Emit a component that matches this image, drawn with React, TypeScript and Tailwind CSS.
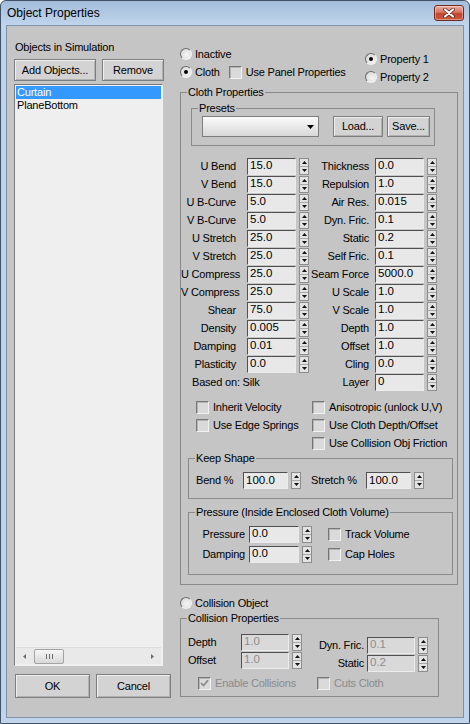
import React from "react";

type Kids = { children?: React.ReactNode };

function Spin() {
  return (
    <div className="flex h-[17px] w-[10px] shrink-0 flex-col border border-[#8c8c8c] bg-[#e3e3e3]">
      <div className="flex flex-1 items-center justify-center border-b border-[#a8a8a8]">
        <svg width="5" height="3" viewBox="0 0 5 3">
          <path d="M2.5 0L5 3H0Z" fill="#111" />
        </svg>
      </div>
      <div className="flex flex-1 items-center justify-center">
        <svg width="5" height="3" viewBox="0 0 5 3">
          <path d="M0 0H5L2.5 3Z" fill="#111" />
        </svg>
      </div>
    </div>
  );
}

function Num({ v, w, dis }: { v: string; w: string; dis?: boolean }) {
  return (
    <div
      className={`flex h-[17px] shrink-0 items-center overflow-hidden border border-t-[#505050] border-l-[#505050] border-b-[#ececec] border-r-[#ececec] pl-[2px] text-[11.5px] leading-none tracking-normal ${
        dis ? "bg-[#d9d9d9] text-[#8e8e8e]" : "bg-[#e8e8e8] text-black"
      } ${w}`}
    >
      {v}
    </div>
  );
}

function Radio({ on }: { on?: boolean }) {
  return (
    <div className="flex h-[12px] w-[12px] shrink-0 items-center justify-center rounded-full border border-t-[#6c6c6c] border-l-[#6c6c6c] border-b-[#f3f3f3] border-r-[#f3f3f3] bg-[radial-gradient(circle_at_60%_60%,#f6f6f6,#d2d2d2)]">
      {on && <div className="h-[4px] w-[4px] rounded-full bg-black" />}
    </div>
  );
}

function Box({ checked, dis }: { checked?: boolean; dis?: boolean }) {
  return (
    <div className="flex h-[13px] w-[13px] shrink-0 items-center justify-center border border-t-[#777777] border-l-[#777777] border-b-[#f2f2f2] border-r-[#f2f2f2] bg-[#dadada] shadow-[inset_1px_1px_0_#b4b4b4]">
      {checked && (
        <svg width="9" height="8" viewBox="0 0 9 8">
          <path d="M1 4L3.5 6.5L8 1.2" stroke={dis ? "#8a8a8a" : "#000"} strokeWidth="1.7" fill="none" />
        </svg>
      )}
    </div>
  );
}

function Btn({ children, cls }: Kids & { cls: string }) {
  return (
    <div
      className={`flex shrink-0 items-center justify-center border border-[#7e7e7e] bg-[#d3d3d3] shadow-[inset_1px_1px_0_#efefef,inset_-1px_-1px_0_#b2b2b2] text-black ${cls}`}
    >
      {children}
    </div>
  );
}

function Group({ label, cls, children }: Kids & { label: string; cls: string }) {
  return (
    <fieldset className={`border border-[#8a8a8a] ${cls}`}>
      <legend className="ml-[6px] px-[1px] leading-[13px]">{label}</legend>
      {children}
    </fieldset>
  );
}

const rows: [string, string, string, string][] = [
  ["U Bend", "15.0", "Thickness", "0.0"],
  ["V Bend", "15.0", "Repulsion", "1.0"],
  ["U B-Curve", "5.0", "Air Res.", "0.015"],
  ["V B-Curve", "5.0", "Dyn. Fric.", "0.1"],
  ["U Stretch", "25.0", "Static", "0.2"],
  ["V Stretch", "25.0", "Self Fric.", "0.1"],
  ["U Compress", "25.0", "Seam Force", "5000.0"],
  ["V Compress", "25.0", "U Scale", "1.0"],
  ["Shear", "75.0", "V Scale", "1.0"],
  ["Density", "0.005", "Depth", "1.0"],
  ["Damping", "0.01", "Offset", "1.0"],
  ["Plasticity", "0.0", "Cling", "0.0"],
];

function ParamRow({ r }: { r: [string, string, string, string] }) {
  return (
    <div className="flex h-[18px] items-center">
      <div className="w-[55px] text-right whitespace-nowrap">{r[0]}</div>
      <Num v={r[1]} w="ml-[11px] w-[49px]" />
      <div className="ml-[3px]">
        <Spin />
      </div>
      <div className="w-[60px] text-right whitespace-nowrap">{r[2]}</div>
      <Num v={r[3]} w="ml-[6px] w-[49px]" />
      <div className="ml-[3px]">
        <Spin />
      </div>
    </div>
  );
}

function CheckItem({ label, w, checked, dis }: { label: string; w: string; checked?: boolean; dis?: boolean }) {
  return (
    <div className={`flex h-[18px] shrink-0 items-center gap-[4px] whitespace-nowrap ${w} ${dis ? "text-[#8a8a8a]" : ""}`}>
      <Box checked={checked} dis={dis} />
      <span>{label}</span>
    </div>
  );
}

function RadioItem({ label, on }: { label: string; on?: boolean }) {
  return (
    <div className="flex h-[18px] shrink-0 items-center gap-[3px] whitespace-nowrap">
      <Radio on={on} />
      <span>{label}</span>
    </div>
  );
}

export default function App() {
  return (
    <div className="h-[724px] w-[470px] overflow-hidden font-['Liberation_Sans',Arial,sans-serif] text-[11px] leading-[13px] tracking-[-0.2px] text-black">
      <div className="flex h-full w-full flex-col rounded-t-[6px] border border-[#3f5268] bg-[linear-gradient(180deg,#a3bddb_0px,#c0d5ec_24px,#c0d5ec_100%)] px-[5px] pb-[5px]">
        {/* Title bar */}
        <div className="flex h-[24px] shrink-0 items-center">
          <span className="ml-[1px] text-[12px] tracking-normal text-black">Object Properties</span>
          <div className="ml-auto flex h-[16px] w-[30px] items-center justify-center rounded-[3px] border border-[#6e2b22] bg-[linear-gradient(180deg,#eab0a2_0%,#d8735f_45%,#c3432d_55%,#cf5a40_100%)] shadow-[inset_0_0_0_1px_rgba(255,255,255,0.35)]">
            <svg width="12" height="10" viewBox="0 0 12 10">
              <path d="M2 1.5L10 8.5M10 1.5L2 8.5" stroke="#5a1d15" strokeWidth="3.6" strokeLinecap="round" />
              <path d="M2 1.5L10 8.5M10 1.5L2 8.5" stroke="#ffffff" strokeWidth="2.2" strokeLinecap="round" />
            </svg>
          </div>
        </div>

        {/* Client */}
        <div className="flex flex-1 border border-[#7e93ab] bg-[#c5c5c5] pl-[7px]">
          {/* Left column */}
          <div className="flex w-[156px] shrink-0 flex-col pt-[15px]">
            <div className="ml-[1px] h-[13px] whitespace-nowrap">Objects in Simulation</div>
            <div className="mt-[5px] flex gap-[6px]">
              <Btn cls="h-[22px] w-[82px]">Add Objects...</Btn>
              <Btn cls="h-[22px] w-[62px]">Remove</Btn>
            </div>
            <div className="mt-[3px] flex h-[582px] w-[149px] flex-col border border-t-[#7a7a7a] border-l-[#7a7a7a] border-b-[#f2f2f2] border-r-[#f2f2f2] bg-[#efefef] p-[1px]">
              <div className="h-[13px] bg-[#3399ff] pl-[1px] text-white">Curtain</div>
              <div className="h-[13px] pl-[1px]">PlaneBottom</div>
              <div className="mt-auto flex h-[17px] items-center border-t border-[#dcdcdc] bg-[#e9e9e9]">
                <div className="flex w-[17px] justify-center">
                  <svg width="3" height="5" viewBox="0 0 3 5">
                    <path d="M3 0V5L0 2.5Z" fill="#6a6a6a" />
                  </svg>
                </div>
                <div className="ml-[1px] flex h-[15px] w-[30px] items-center justify-center rounded-[2px] border border-[#a3a3a3] bg-gradient-to-b from-[#f6f6f6] to-[#d9d9d9]">
                  <svg width="7" height="5" viewBox="0 0 7 5">
                    <path d="M0.5 0V5M3.5 0V5M6.5 0V5" stroke="#6b6b6b" strokeWidth="1" />
                  </svg>
                </div>
                <div className="flex-1" />
                <div className="flex w-[17px] justify-center">
                  <svg width="3" height="5" viewBox="0 0 3 5">
                    <path d="M0 0V5L3 2.5Z" fill="#6a6a6a" />
                  </svg>
                </div>
              </div>
            </div>
            <div className="mt-[8px] flex gap-[6px] pl-[1px]">
              <Btn cls="h-[24px] w-[75px]">OK</Btn>
              <Btn cls="h-[24px] w-[75px]">Cancel</Btn>
            </div>
          </div>

          {/* Right column */}
          <div className="ml-[10px] flex w-[278px] shrink-0 flex-col pt-[19px]">
            <div className="flex h-[36px] items-start">
              <div className="flex w-[185px] flex-col">
                <RadioItem label="Inactive" />
                <div className="flex h-[18px] items-center">
                  <RadioItem label="Cloth" on />
                  <div className="ml-[9px]">
                    <CheckItem label="Use Panel Properties" w="" />
                  </div>
                </div>
              </div>
              <div className="flex flex-col pt-[5px]">
                <RadioItem label="Property 1" on />
                <RadioItem label="Property 2" />
              </div>
            </div>

            <Group label="Cloth Properties" cls="mt-[5px] w-[278px] pb-[9px]">
              <Group label="Presets" cls="mt-[3px] ml-[10px] w-[244px] pb-[8px]">
                <div className="mt-[1px] flex items-center">
                  <div className="ml-[10px] flex h-[21px] w-[117px] items-center justify-end border border-[#7e7e7e] bg-gradient-to-b from-[#fbfbfb] to-[#d8d8d8] pr-[4px]">
                    <svg width="7" height="4" viewBox="0 0 7 4">
                      <path d="M0 0H7L3.5 4Z" fill="#000" />
                    </svg>
                  </div>
                  <Btn cls="ml-[14px] h-[21px] w-[50px]">Load...</Btn>
                  <Btn cls="ml-[4px] h-[21px] w-[43px]">Save...</Btn>
                </div>
              </Group>

              <div className="mt-[11px] flex flex-col">
                {rows.map((r) => (
                  <ParamRow key={r[0]} r={r} />
                ))}
                <div className="flex h-[18px] items-center">
                  <div className="w-[128px] pl-[11px] whitespace-nowrap">Based on: Silk</div>
                  <div className="w-[60px] text-right">Layer</div>
                  <Num v="0" w="ml-[6px] w-[49px]" />
                  <div className="ml-[3px]">
                    <Spin />
                  </div>
                </div>
              </div>

              <div className="mt-[7px] flex flex-col pl-[15px]">
                <div className="flex">
                  <CheckItem label="Inherit Velocity" w="w-[116px]" />
                  <CheckItem label="Anisotropic (unlock U,V)" w="" />
                </div>
                <div className="flex">
                  <CheckItem label="Use Edge Springs" w="w-[116px]" />
                  <CheckItem label="Use Cloth Depth/Offset" w="" />
                </div>
                <div className="flex">
                  <div className="w-[116px]" />
                  <CheckItem label="Use Collision Obj Friction" w="" />
                </div>
              </div>

              <Group label="Keep Shape" cls="ml-[7px] w-[265px] pb-[9px]">
                <div className="mt-[7px] flex items-center pl-[7px]">
                  <div className="w-[47px] whitespace-nowrap">Bend %</div>
                  <Num v="100.0" w="w-[45px]" />
                  <div className="ml-[3px]">
                    <Spin />
                  </div>
                  <div className="ml-[10px] w-[55px] whitespace-nowrap">Stretch %</div>
                  <Num v="100.0" w="w-[45px]" />
                  <div className="ml-[3px]">
                    <Spin />
                  </div>
                </div>
              </Group>

              <Group label="Pressure (Inside Enclosed Cloth Volume)" cls="mt-[7px] ml-[7px] w-[265px] pb-[10px]">
                <div className="mt-[5px] flex flex-col">
                  {[
                    ["Pressure", "Track Volume"],
                    ["Damping", "Cap Holes"],
                  ].map(([l, c]) => (
                    <div key={l} className="flex h-[20px] items-center">
                      <div className="w-[56px] text-right">{l}</div>
                      <Num v="0.0" w="ml-[4px] w-[50px]" />
                      <div className="ml-[3px]">
                        <Spin />
                      </div>
                      <div className="ml-[16px]">
                        <CheckItem label={c} w="" />
                      </div>
                    </div>
                  ))}
                </div>
              </Group>
            </Group>

            <div className="mt-[9px]">
              <RadioItem label="Collision Object" />
            </div>

            <Group label="Collision Properties" cls="w-[259px] pb-[4px]">
              <div className="mt-[8px] flex pl-[7px]">
                <div className="flex flex-col">
                  {[
                    ["Depth", "1.0"],
                    ["Offset", "1.0"],
                  ].map(([l, v]) => (
                    <div key={l} className="flex h-[18px] items-center">
                      <div className="w-[53px]">{l}</div>
                      <Num v={v} w="w-[48px]" dis />
                      <div className="ml-[3px]">
                        <Spin />
                      </div>
                    </div>
                  ))}
                </div>
                <div className="mt-[3px] flex flex-col">
                  {[
                    ["Dyn. Fric.", "0.1"],
                    ["Static", "0.2"],
                  ].map(([l, v]) => (
                    <div key={l} className="flex h-[18px] items-center">
                      <div className="w-[62px] text-right whitespace-nowrap">{l}</div>
                      <Num v={v} w="ml-[3px] w-[48px]" dis />
                      <div className="ml-[3px]">
                        <Spin />
                      </div>
                    </div>
                  ))}
                </div>
              </div>
              <div className="mt-[2px] flex pl-[17px]">
                <CheckItem label="Enable Collisions" w="w-[119px]" checked dis />
                <CheckItem label="Cuts Cloth" w="" dis />
              </div>
            </Group>
          </div>
        </div>
      </div>
    </div>
  );
}
